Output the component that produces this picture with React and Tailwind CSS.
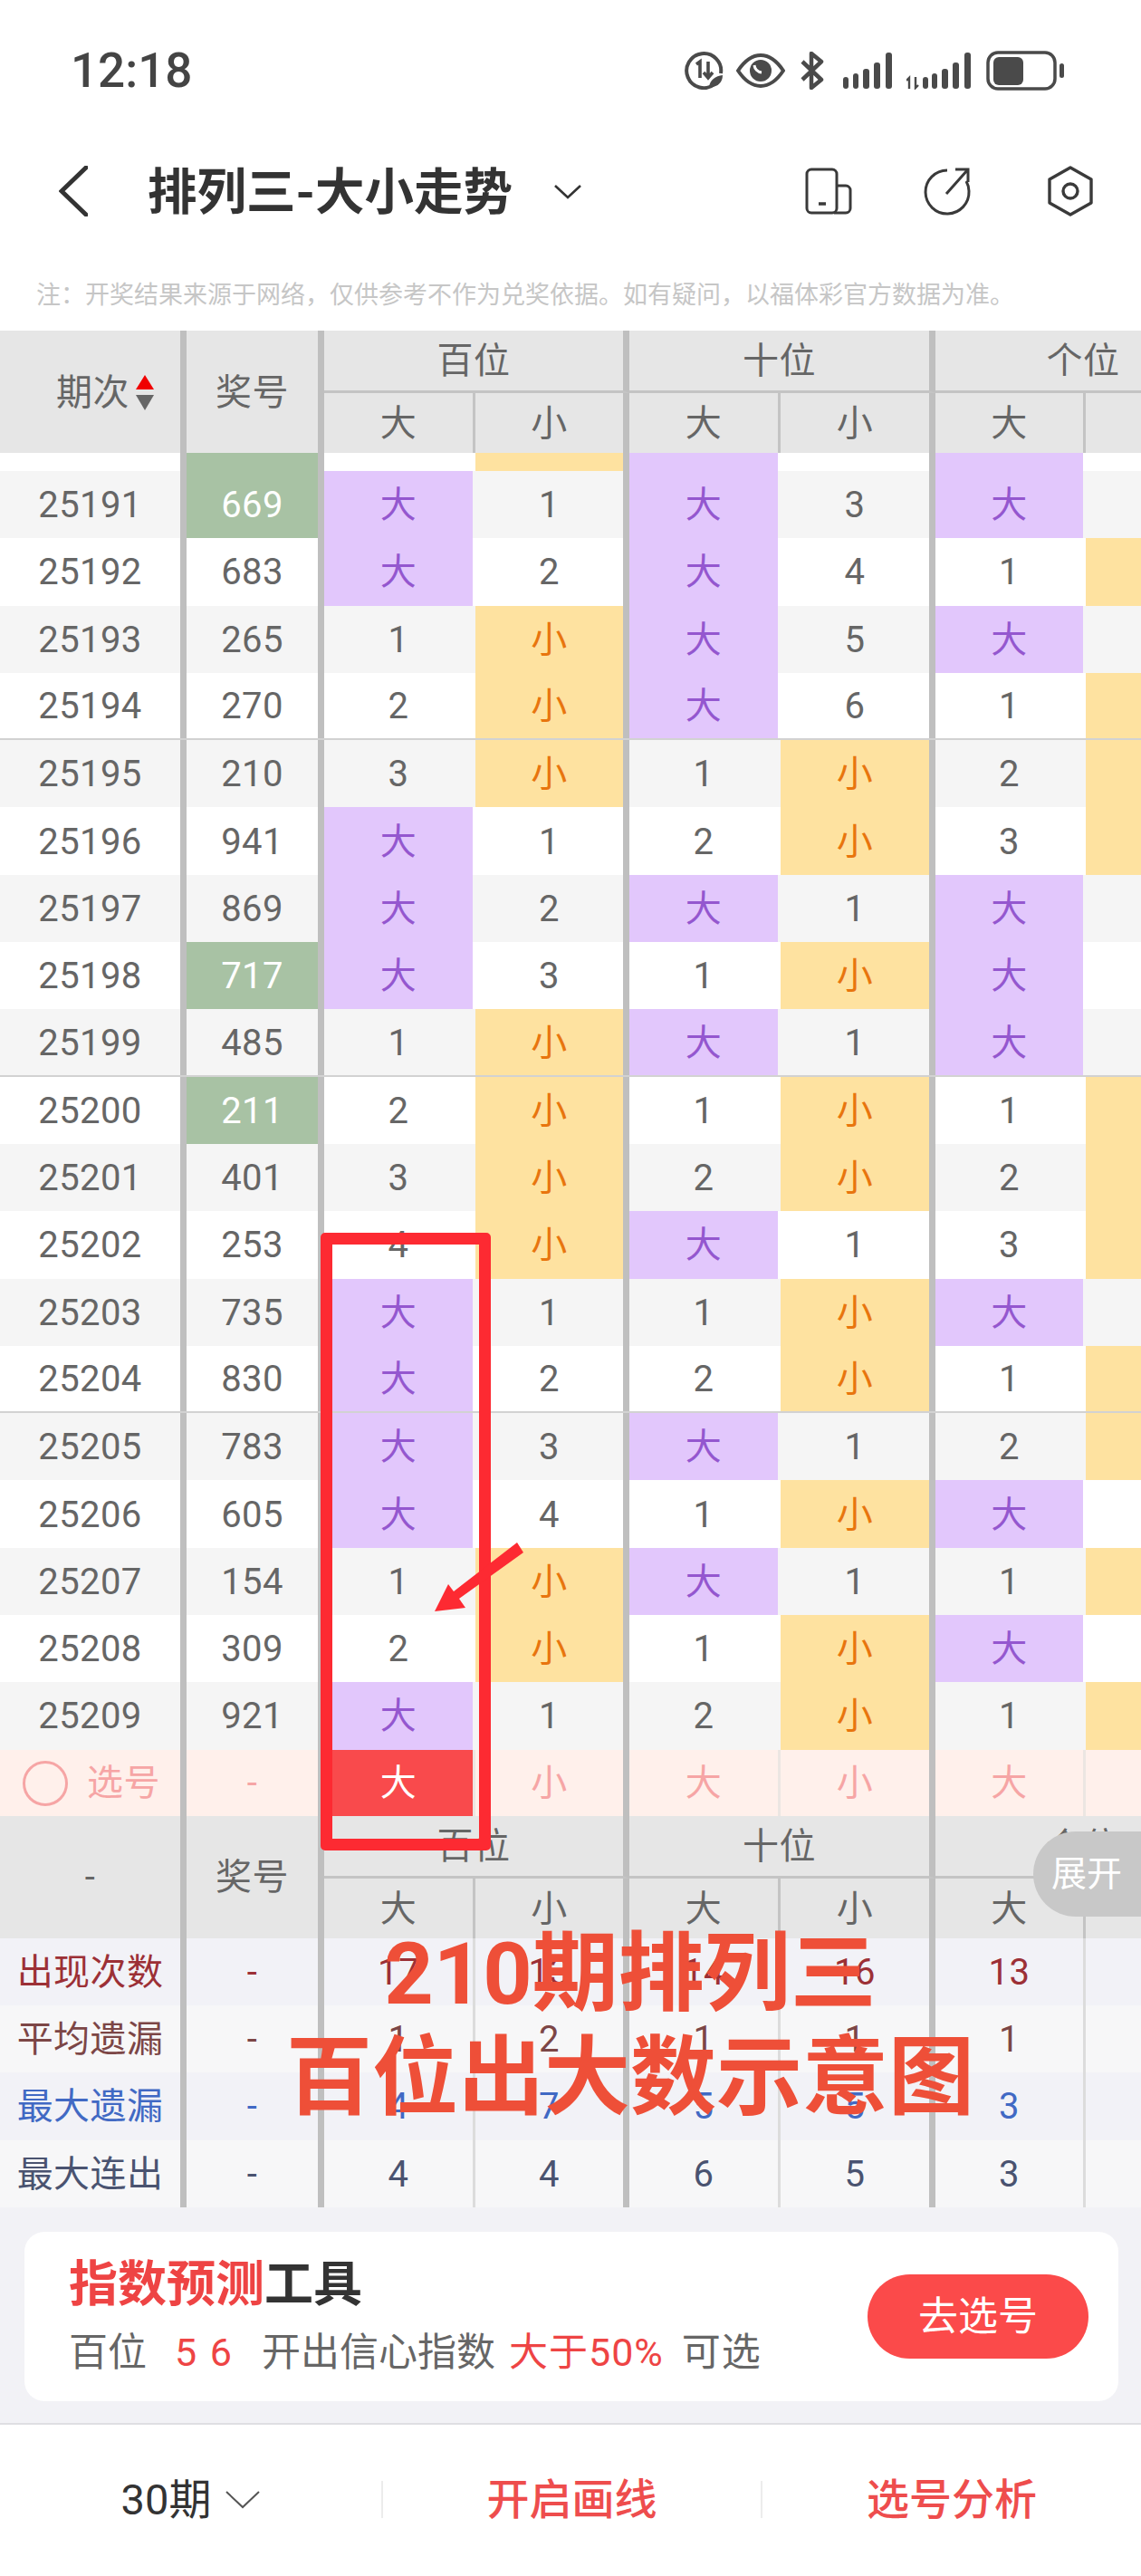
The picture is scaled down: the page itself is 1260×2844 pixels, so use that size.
const WIDTHS = ['w-[206px]', 'w-[152px]', 'w-[167px]', 'w-[170px]', 'w-[167px]', 'w-[171px]', 'w-[166px]', 'w-[167px]'];
const THICK = 'border-r-[7px] border-r-[#bfbfbf]';
const THIN = {
  header: 'border-r-[3px] border-r-[#c4c4c4]',
  body: 'border-r-[3px] border-r-transparent',
  select: 'border-r-[3px] border-r-[#ece6e2]',
  stat: 'border-r-[3px] border-r-[#dcdcdc]',
};
const FONT = "font-['Roboto','Noto_Sans_CJK_SC',sans-serif]";

const rows = [
  ['25191', '669', 1, '大', '1', '大', '3', '大', ''],
  ['25192', '683', 0, '大', '2', '大', '4', '1', '小'],
  ['25193', '265', 0, '1', '小', '大', '5', '大', ''],
  ['25194', '270', 0, '2', '小', '大', '6', '1', '小'],
  ['25195', '210', 0, '3', '小', '1', '小', '2', '小'],
  ['25196', '941', 0, '大', '1', '2', '小', '3', '小'],
  ['25197', '869', 0, '大', '2', '大', '1', '大', ''],
  ['25198', '717', 1, '大', '3', '1', '小', '大', ''],
  ['25199', '485', 0, '1', '小', '大', '1', '大', ''],
  ['25200', '211', 1, '2', '小', '1', '小', '1', '小'],
  ['25201', '401', 0, '3', '小', '2', '小', '2', '小'],
  ['25202', '253', 0, '4', '小', '大', '1', '3', '小'],
  ['25203', '735', 0, '大', '1', '1', '小', '大', ''],
  ['25204', '830', 0, '大', '2', '2', '小', '1', '小'],
  ['25205', '783', 0, '大', '3', '大', '1', '2', '小'],
  ['25206', '605', 0, '大', '4', '1', '小', '大', ''],
  ['25207', '154', 0, '1', '小', '大', '1', '1', '小'],
  ['25208', '309', 0, '2', '小', '1', '小', '大', ''],
  ['25209', '921', 0, '大', '1', '2', '小', '1', '小'],
];

const stats = [
  { name: '出现次数', text: 'text-[#9c3036]', bg: 'bg-[#f2f2f7]', h: 'h-[74px]', v: ['-', '17', '13', '14', '16', '13', ''] },
  { name: '平均遗漏', text: 'text-[#7c4646]', bg: 'bg-[#f7f7f8]', h: 'h-[74px]', v: ['-', '1', '2', '1', '1', '1', ''] },
  { name: '最大遗漏', text: 'text-[#4169c4]', bg: 'bg-[#f2f2f7]', h: 'h-[75px]', v: ['-', '4', '7', '5', '5', '3', ''] },
  { name: '最大连出', text: 'text-[#4a5370]', bg: 'bg-[#f7f7f8]', h: 'h-[74px]', v: ['-', '4', '4', '6', '5', '3', ''] },
];

function isThick(i) {
  return i === 0 || i === 1 || i === 3 || i === 5 || i === 7;
}

function Cell({ i, kind = 'body', className = '', children }) {
  return (
    <div
      className={`${WIDTHS[i]} ${isThick(i) ? THICK : THIN[kind]} shrink-0 h-full bg-clip-padding flex items-center justify-center pt-[2px] ${className}`}
    >
      {children}
    </div>
  );
}

function ValueCell({ i, value }) {
  const hidden = i === 7;
  if (value === '大') {
    return <Cell i={i} className="bg-[#e2c7fc] text-[#9457cf]">大</Cell>;
  }
  if (value === '小') {
    return <Cell i={i} className="bg-[#fee2a0] text-[#e8750e]">{hidden ? '' : '小'}</Cell>;
  }
  return <Cell i={i}>{value}</Cell>;
}

function HeaderRow({ first, topH, subH, last = '小' }) {
  const group = (label, a, b, wide, bText) => (
    <div className={`${wide} shrink-0 flex flex-col h-full`}>
      <div className={`${topH} flex items-center justify-center pt-[2px] border-r-[7px] border-r-[#bfbfbf] border-b-[3px] border-b-[#c4c4c4]`}>
        {label}
      </div>
      <div className={`${subH} flex`}>
        <Cell i={a} kind="header">大</Cell>
        <Cell i={b} kind="header">{bText}</Cell>
      </div>
    </div>
  );
  return (
    <div className="flex h-[135px] bg-[#e6e6e6] text-[#666666]">
      <Cell i={0}>{first}</Cell>
      <Cell i={1}>奖号</Cell>
      {group('百位', 2, 3, 'w-[337px]', '小')}
      {group('十位', 4, 5, 'w-[338px]', '小')}
      {group('个位', 6, 7, 'w-[333px]', '')}
    </div>
  );
}

function Table() {
  return (
    <div className={`w-[1260px] overflow-hidden text-[40px] leading-none tracking-[0.4px] text-[#666666] ${FONT}`}>
      <HeaderRow
        topH="h-[69px]"
        subH="h-[66px]"
        first={
          <div className="flex items-center w-full pl-[62px]">
            <span>期次</span>
            <svg width="22" height="40" viewBox="0 0 22 40" className="ml-[6px]">
              <polygon points="11,0 21,16 1,16" fill="#f00000" />
              <polygon points="1,22 21,22 11,39" fill="#666666" />
            </svg>
          </div>
        }
      />
      <div className="flex h-[20px] bg-white">
        <Cell i={0} />
        <Cell i={1} className="bg-[#a8c2a4]" />
        <Cell i={2} />
        <Cell i={3} className="bg-[#fee2a0]" />
        <Cell i={4} className="bg-[#e2c7fc]" />
        <Cell i={5} />
        <Cell i={6} className="bg-[#e2c7fc]" />
        <Cell i={7} />
      </div>
      {rows.map((r, idx) => (
        <div
          key={r[0]}
          className={`flex h-[74.3px] ${idx % 2 === 0 ? 'bg-[#f5f5f5]' : 'bg-white'} ${
            idx === 3 || idx === 8 || idx === 13 ? 'border-b-2 border-b-[#d2d2d2]' : ''
          }`}
        >
          <Cell i={0}>{r[0]}</Cell>
          <Cell i={1} className={r[2] ? 'bg-[#a8c2a4] text-white' : ''}>{r[1]}</Cell>
          {r.slice(3).map((v, j) => (
            <ValueCell key={j} i={j + 2} value={v} />
          ))}
        </div>
      ))}
      <div className="flex h-[73px] bg-[#fff0eb] text-[#f6a5a5]">
        <Cell i={0}>
          <div className="flex items-center w-full pl-[25px]">
            <div className="w-[50px] h-[50px] rounded-full border-[3px] border-[#f6a5a5]" />
            <span className="ml-[21px]">选号</span>
          </div>
        </Cell>
        <Cell i={1}>-</Cell>
        <Cell i={2} kind="select" className="bg-[#f94a4c] text-white">大</Cell>
        <Cell i={3} kind="select">小</Cell>
        <Cell i={4} kind="select">大</Cell>
        <Cell i={5} kind="select">小</Cell>
        <Cell i={6} kind="select">大</Cell>
        <Cell i={7} kind="select" />
      </div>
      <HeaderRow topH="h-[69px]" subH="h-[66px]" first="-" />
      {stats.map((s) => (
        <div key={s.name} className={`flex ${s.h} ${s.bg} ${s.text}`}>
          <Cell i={0} kind="stat">{s.name}</Cell>
          {s.v.map((v, j) => (
            <Cell key={j} i={j + 1} kind="stat">{v}</Cell>
          ))}
        </div>
      ))}
    </div>
  );
}

function StatusIcons() {
  const c = '#4a4a4a';
  return (
    <div className="flex items-center">
      <svg width="44" height="42" viewBox="0 0 44 42" fill="none" stroke={c}>
        <path d="M33 36 A19 19 0 1 1 40 24" strokeWidth="4" />
        <path d="M13 14 L17 11 V29" strokeWidth="3.6" />
        <path d="M26 11 V28 M21 23 L26 29 L31 23" strokeWidth="3.6" />
        <path d="M27 39 C28 31 34 27 42 26 C42 34 36 40 27 39 Z" fill={c} stroke="none" />
      </svg>
      <svg width="54" height="38" viewBox="0 0 54 38" fill="none" stroke={c} className="ml-[13px]">
        <path d="M2 19 C10 7 18 2 27 2 C36 2 44 7 52 19 C44 31 36 36 27 36 C18 36 10 31 2 19 Z" strokeWidth="4" />
        <circle cx="27" cy="19" r="12" fill={c} stroke="none" />
        <path d="M20 13 A9 9 0 0 0 28 21" stroke="#ffffff" strokeWidth="3" />
      </svg>
      <svg width="28" height="42" viewBox="0 0 28 42" fill="none" stroke={c} strokeWidth="4.5" strokeLinejoin="round" className="ml-[16px]">
        <path d="M3 11 L24 31 L13 40 L13 2 L24 11 L3 31" />
      </svg>
      <svg width="54" height="42" viewBox="0 0 54 42" fill={c} className="ml-[20px]">
        <rect x="0" y="28" width="6" height="13" rx="3" />
        <rect x="11" y="24" width="6" height="17" rx="3" />
        <rect x="22" y="19" width="7" height="22" rx="3" />
        <rect x="34" y="12" width="7" height="29" rx="3" />
        <rect x="47" y="1" width="7" height="40" rx="3" />
      </svg>
      <svg width="72" height="42" viewBox="0 0 72 42" fill={c} className="ml-[16px]">
        <path d="M3 41 V29 L0 32 M10 28 V40 L13 37" stroke={c} strokeWidth="2.4" fill="none" />
        <rect x="18" y="28" width="6" height="13" rx="3" />
        <rect x="28" y="24" width="6" height="17" rx="3" />
        <rect x="39" y="19" width="7" height="22" rx="3" />
        <rect x="51" y="12" width="7" height="29" rx="3" />
        <rect x="64" y="1" width="7" height="40" rx="3" />
      </svg>
      <svg width="86" height="44" viewBox="0 0 86 44" fill="none" className="ml-[16px]">
        <rect x="2" y="2" width="74" height="40" rx="11" stroke={c} strokeWidth="3.5" />
        <rect x="8" y="7" width="33" height="31" rx="6" fill={c} />
        <rect x="81" y="14" width="5" height="16" rx="2.5" fill={c} />
      </svg>
    </div>
  );
}

function TopBar() {
  return (
    <div className={FONT}>
      <div className="h-[156px] flex items-center justify-between pl-[78px] pr-[85px]">
        <span className="text-[53px] leading-none font-medium text-[#444444] font-['Roboto',sans-serif]">12:18</span>
        <StatusIcons />
      </div>
      <div className="h-[110px] flex items-center pl-[65px] pr-[53px]">
        <svg width="32" height="56" viewBox="0 0 32 56" fill="none" stroke="#333333" strokeWidth="5" strokeLinecap="round">
          <path d="M30 2 L3 28 L30 54" />
        </svg>
        <span className="ml-[66px] pt-[2px] text-[54.5px] leading-none font-bold text-[#333333] whitespace-nowrap">排列三-大小走势</span>
        <svg width="32" height="17" viewBox="0 0 32 17" fill="none" stroke="#333333" strokeWidth="2.6" className="ml-[45px]">
          <path d="M2 2 L16 15 L30 2" />
        </svg>
        <div className="ml-auto flex items-center">
          <svg width="52" height="52" viewBox="0 0 52 52" fill="none" stroke="#3a3a3a" strokeWidth="3">
            <rect x="2" y="2" width="33" height="48" rx="5" />
            <path d="M35 20 H45 A5 5 0 0 1 50 25 V45 A5 5 0 0 1 45 50 H32" />
            <path d="M15 40 H23" strokeWidth="3.5" />
          </svg>
          <svg width="54" height="54" viewBox="0 0 54 54" fill="none" stroke="#3a3a3a" strokeWidth="3" className="ml-[78px]">
            <path d="M27 4 A24 24 0 1 0 51 27 A24 24 0 0 0 48 16" />
            <path d="M26 30 L50 3 M36 3 H50 V17" />
          </svg>
          <svg width="50" height="56" viewBox="0 0 50 56" fill="none" stroke="#3a3a3a" strokeWidth="3.4" strokeLinejoin="round" className="ml-[84px]">
            <path d="M25 2 L48 15 V41 L25 54 L2 41 V15 Z" />
            <circle cx="25" cy="28" r="8" />
          </svg>
        </div>
      </div>
      <div className="h-[99px] pt-[22px] pl-[40px] flex items-center text-[27px] leading-none text-[#c6c6c6] whitespace-nowrap">
        注：开奖结果来源于网络，仅供参考不作为兑奖依据。如有疑问，以福体彩官方数据为准。
      </div>
    </div>
  );
}

function Tool() {
  return (
    <div className={`h-[240px] bg-[#f2f2f6] pt-[27px] pl-[27px] pr-[25px] border-b-2 border-b-[#dedee2] ${FONT}`}>
      <div className="h-[187px] bg-white rounded-[22px] flex items-center justify-between pl-[49px] pr-[33px]">
        <div>
          <div className="text-[54px] leading-none font-bold text-[#333333]">
            <span className="text-[#ee4444]">指数预测</span>工具
          </div>
          <div className="mt-[26px] flex items-center text-[43px] leading-none text-[#666666] whitespace-nowrap">
            <span>百位</span>
            <span className="ml-[31px] text-[#ee4444] tracking-[2px]">5 6</span>
            <span className="ml-[31px]">开出信心指数</span>
            <span className="ml-[15px] text-[#ee4444] tracking-[1px]">大于50%</span>
            <span className="ml-[20px] tracking-[1px]">可选</span>
          </div>
        </div>
        <div className="w-[244px] h-[93px] rounded-full bg-[#fb4a4a] text-white text-[44px] leading-none flex items-center justify-center pt-[2px]">
          去选号
        </div>
      </div>
    </div>
  );
}

function Footer() {
  return (
    <div className={`h-[166px] bg-white flex items-center text-[47px] leading-none ${FONT}`}>
      <div className="w-[421px] h-[41px] flex items-center justify-center text-[#333333]">
        <span>30期</span>
        <svg width="38" height="20" viewBox="0 0 38 20" fill="none" stroke="#555555" strokeWidth="2" className="ml-[16px]">
          <path d="M1 1 L19 18 L37 1" />
        </svg>
      </div>
      <div className="w-[421px] h-[41px] flex items-center justify-center border-x-2 border-x-[#ececec] text-[#ee4d4d] font-medium">
        开启画线
      </div>
      <div className="w-[418px] h-[41px] flex items-center justify-center text-[#ee4d4d] font-medium">
        选号分析
      </div>
    </div>
  );
}

export default function App() {
  return (
    <div className="relative w-[1260px] h-[2844px] overflow-hidden bg-white">
      <TopBar />
      <Table />
      <Tool />
      <Footer />

      <div className="absolute left-[354px] top-[1361px] w-[188px] h-[682px] border-[13px] border-[#fd2a32] rounded-[5px]" />
      <svg className="absolute left-[470px] top-[1695px]" width="115" height="90" viewBox="0 0 115 90" fill="#fd2a32">
        <polygon points="101,8 108,19 37,70 44,80 10,84 25,54 31,62" />
      </svg>

      <div className={`absolute left-[296px] top-[2122px] w-[800px] text-center text-[95px] leading-[115px] font-bold text-[#ee4f38] whitespace-nowrap ${FONT}`}>
        <div>210期排列三</div>
        <div>百位出大数示意图</div>
      </div>

      <div className={`absolute left-[1141px] top-[2022px] w-[119px] h-[94px] rounded-l-full bg-[#c8c8c8] text-white text-[39px] leading-none flex items-center pl-[20px] whitespace-nowrap ${FONT}`}>
        展开
      </div>
    </div>
  );
}
